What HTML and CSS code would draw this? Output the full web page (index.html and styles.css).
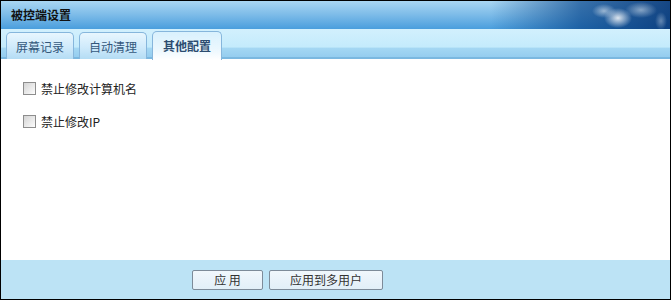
FILE: index.html
```html
<html>
<head>
<title>被控端设置</title>
<meta charset="utf-8" />
<link rel="stylesheet" href="styles.css">
</head>
<body>

<div class="panel">
<div class="title">被控端设置</div>

<div class="tabbar">
<div class="tab">屏幕记录</div>
<div class="tab">自动清理</div>
<div class="tab active">其他配置</div>
</div>

<div class="content">
<label class="opt"><input type="checkbox" /> 禁止修改计算机名</label>
<label class="opt"><input type="checkbox" /> 禁止修改IP</label>
</div>

<div class="footer">
<button class="btn apply">应&nbsp;用</button>
<button class="btn multi">应用到多用户</button>
</div>
</div>

</body>
</html>
```

FILE: styles.css
```css
body {
    margin: 0;
    background-color: #fff;
    font-family: "Noto Sans CJK SC", "DejaVu Sans", sans-serif;
    font-size: 12px;
}

.panel {
    width: 669px;
    height: 298px;
    border: 1px solid #000;
    display: flex;
    flex-direction: column;
}

.title {
    height: 28px;
    line-height: 28px;
    padding-left: 10px;
    font-weight: bold;
    color: #111;
    background:
        radial-gradient(ellipse 14px 10px at 617px 17px, rgba(240,244,248,0.9), rgba(240,244,248,0) 100%),
        radial-gradient(ellipse 12px 7px at 603px 10px, rgba(230,238,245,0.6), rgba(230,238,245,0) 100%),
        radial-gradient(ellipse 16px 8px at 640px 9px, rgba(220,232,242,0.55), rgba(220,232,242,0) 100%),
        radial-gradient(ellipse 6px 9px at 660px 20px, rgba(220,232,242,0.4), rgba(220,232,242,0) 100%),
        linear-gradient(to right, rgba(8,70,140,0) 0, rgba(8,70,140,0) 490px, rgba(8,70,140,0.7) 580px, rgba(6,55,120,0.9) 669px),
        linear-gradient(#a9d6f2, #7cbbe8 50%, #4a9edd);
}

.tabbar {
    height: 30px;
    display: flex;
    align-items: flex-end;
    gap: 5px;
    padding-left: 5px;
    background: linear-gradient(#d2f0fd, #c4ebfc 60%, #a4d7f3 64%, #95cdef 93%, #7bb8e0 93%);
}

.tab {
    height: 27px;
    line-height: 27px;
    padding: 0 9px;
    box-sizing: border-box;
    border: 1px solid #86b6dc;
    border-bottom: none;
    border-radius: 5px 5px 0 0;
    color: #34587c;
    background: linear-gradient(#e8f6fe, #cfeafb 55%, #b4dcf4);
}

.tab.active {
    height: 29px;
    margin-bottom: -1px;
    padding: 0 10px;
    font-weight: bold;
    color: #2c4c70;
    background: linear-gradient(#d9f1fd, #eaf7fe 60%, #fff);
}

.content {
    flex: 1;
    padding: 20px 22px 0;
    display: flex;
    flex-direction: column;
    gap: 14px;
    color: #222;
}

.opt {
    display: flex;
    align-items: center;
    gap: 5px;
    height: 19px;
}

.opt input {
    appearance: none;
    margin: 0;
    width: 13px;
    height: 13px;
    border: 1px solid #8d8d8d;
    background: linear-gradient(135deg, #d4d4d4, #f4f4f4 80%, #fff);
}

.footer {
    height: 39px;
    background-color: #bce3f5;
    display: flex;
    align-items: center;
    gap: 6px;
    padding-left: 191px;
}

.btn {
    height: 20px;
    padding: 0;
    font-family: inherit;
    font-size: 12px;
    color: #333;
    border: 1px solid #7d8b99;
    border-radius: 2px;
    background: linear-gradient(#f0f7fc, #e2eff8);
}

.btn.apply {
    width: 71px;
}

.btn.multi {
    width: 114px;
}
```
